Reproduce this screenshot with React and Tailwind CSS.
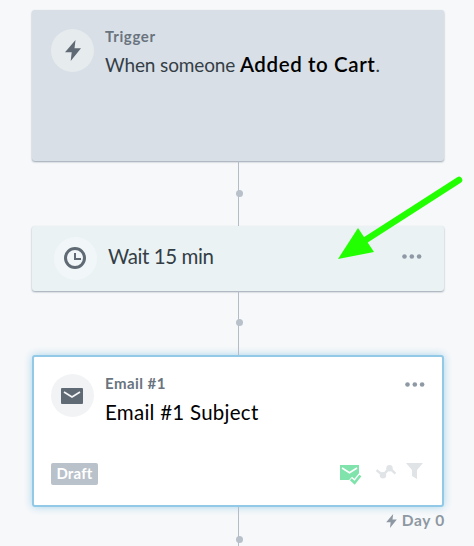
import React from 'react';

function Connector({ className, dotClassName }) {
  return (
    <div className={`flex w-[413px] justify-center ${className}`}>
      <div className="relative w-px bg-[#b4bdc5]">
        <span className={`absolute -left-[2px] size-[7px] rounded-full bg-[#b8c1c9] ${dotClassName}`} />
      </div>
    </div>
  );
}

function IconCircle({ className, children }) {
  return (
    <div className={`flex size-[43px] shrink-0 items-center justify-center rounded-full ${className}`}>
      {children}
    </div>
  );
}

function Dots() {
  return (
    <svg className="h-[5px] w-5" viewBox="0 0 20 5" fill="#8e99a5">
      <circle cx="2.5" cy="2.5" r="2.3" />
      <circle cx="9.8" cy="2.5" r="2.3" />
      <circle cx="17.1" cy="2.5" r="2.3" />
    </svg>
  );
}

function Bolt({ className }) {
  return (
    <svg className={className} viewBox="0 0 16 21" fill="currentColor">
      <path d="M10.5 0 0 12.3h6.7L5.7 21 16 8.2H9.5z" />
    </svg>
  );
}

function TriggerCard() {
  return (
    <section className="flex h-[151px] w-[412px] rounded-[3px] bg-[#d9dfe7] pl-[19px] pt-[19px] shadow-[0_1px_2px_#98a5b0]">
      <IconCircle className="bg-[#e6ebee]">
        <Bolt className="h-[21px] w-4 text-[#5f6a74]" />
      </IconCircle>
      <div className="ml-[11px] whitespace-nowrap">
        <div className="-mt-[3px] text-[15px] leading-[20px] font-bold tracking-[0.65px] text-[#69747e]">Trigger</div>
        <div className="mt-[5px] text-[19px] leading-[26px] text-[#343e46]">
          <span className="tracking-[-0.13px]">When someone </span>
          <span className="text-[20.5px] font-semibold tracking-[0.6px] text-black">Added to Cart</span>
          <span>.</span>
        </div>
      </div>
    </section>
  );
}

function WaitCard() {
  return (
    <section className="flex h-[65px] w-[412px] items-center rounded-[3px] bg-[#eaf2f4] pl-[22px] pr-[22px] shadow-[0_1px_2px_#98a5b0]">
      <IconCircle className="bg-[#f1f7f8]">
        <svg className="mb-px mr-px size-[22px]" viewBox="0 0 22 22" fill="none" stroke="#5f6a74">
          <circle cx="11" cy="11" r="9.5" strokeWidth="3" />
          <path d="M11 6v6h6" strokeWidth="2" />
        </svg>
      </IconCircle>
      <div className="ml-[11px] grow whitespace-nowrap pb-[5px] text-[20.5px] leading-[28px] tracking-[-0.4px] text-[#343e46]">Wait 15 min</div>
      <div className="flex pb-[5px]">
        <Dots />
      </div>
    </section>
  );
}

function EmailCard() {
  return (
    <section className="flex h-[152px] w-[412px] flex-col rounded-[3px] border-2 border-[#91c9e7] bg-white pl-[17px] pr-[18px] pt-[17px] shadow-[0_0_9px_#a6d4ea]">
      <div className="flex grow">
        <IconCircle className="bg-[#f1f3f5]">
          <svg className="mr-px h-4 w-[22px]" viewBox="0 0 22 16">
            <rect width="22" height="16" rx="1" fill="#5f6a74" />
            <path d="m3 4 8 5 8-5" fill="none" stroke="#f5f6f7" strokeWidth="1.7" />
          </svg>
        </IconCircle>
        <div className="ml-[11px] grow whitespace-nowrap">
          <div className="-mt-px text-[15px] leading-[20px] font-bold tracking-[0.45px] text-[#69747e]">Email #1</div>
          <div className="mt-[5px] text-[20.5px] leading-[28px] tracking-[0.26px] text-black">Email #1 Subject</div>
        </div>
        <div className="-mr-px pt-[8px]">
          <Dots />
        </div>
      </div>
      <div className="mb-[20px] flex h-[22px] items-start justify-between">
        <span className="flex h-[22px] w-[47px] items-center justify-center rounded-[2px] bg-[#b9c2ca] pb-px text-[15px] font-bold tracking-[0.2px] text-white">Draft</span>
        <div className="flex h-[22px] items-start pr-px">
          <svg className="mt-[2px] h-5 w-[22px]" viewBox="0 0 22 20">
            <rect width="19" height="15" fill="#7fe3ab" />
            <path d="m2 3 7.5 4.7L17 3" fill="none" stroke="white" strokeWidth="1.7" />
            <path d="m10 14 4.6 4.3L21 10.5" fill="none" stroke="white" strokeWidth="6" />
            <path d="m10.8 14.2 3.8 3.6 5.8-7.3" fill="none" stroke="#7fe3ab" strokeWidth="2.6" />
          </svg>
          <svg className="ml-[14px] mt-[2px] h-[14px] w-5" viewBox="0 0 20 14">
            <path d="m.5 5.2 6.5 5.1L13.5 3l6 5.6" fill="none" stroke="#e0e4e7" strokeWidth="2.4" />
            <circle cx="7" cy="10.3" r="3.2" fill="#e0e4e7" />
            <circle cx="13.5" cy="3.3" r="3.2" fill="#e0e4e7" />
          </svg>
          <svg className="ml-[10px] h-4 w-[17px]" viewBox="0 0 17 16">
            <path d="M0 0h17l-6 7v9l-5-3V7z" fill="#e0e4e7" />
          </svg>
        </div>
      </div>
    </section>
  );
}

export default function App() {
  return (
    <main className="relative flex h-[546px] w-[474px] flex-col overflow-hidden bg-[#f7f8fa] pl-[32px] pt-[10px] font-['Lato',sans-serif]">
      <TriggerCard />
      <Connector className="h-[65px]" dotClassName="top-[29px]" />
      <WaitCard />
      <Connector className="h-[64px]" dotClassName="top-[28px]" />
      <EmailCard />
      <div className="relative flex h-[39px] w-[413px] justify-center">
        <Connector className="h-[39px]" dotClassName="top-[29px]" />
        <div className="absolute right-0 top-[3px] flex items-center gap-[5px] whitespace-nowrap text-[#8e98a2]">
          <Bolt className="mt-px h-[14px] w-[11px]" />
          <span className="text-[15.5px] leading-[20px] font-bold tracking-[0.7px]">Day 0</span>
        </div>
      </div>
      <svg className="absolute left-[330px] top-[170px] h-[95px] w-[140px]" viewBox="330 170 140 95">
        <path d="M459 180 364 241" stroke="#22ff00" strokeWidth="6.5" strokeLinecap="round" />
        <path d="M338 259l20-31 16 24z" fill="#22ff00" />
      </svg>
    </main>
  );
}
